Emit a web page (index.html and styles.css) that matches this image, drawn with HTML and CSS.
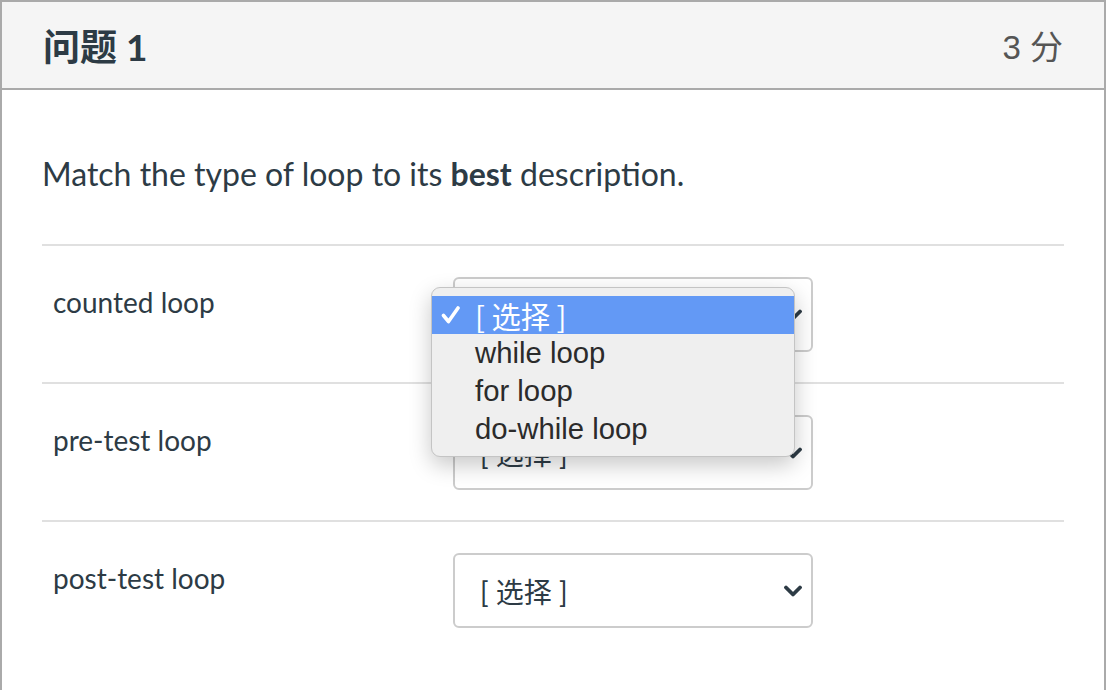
FILE: index.html
```html
<!DOCTYPE html>
<html lang="zh">
<head>
<meta charset="utf-8">
<title>问题 1</title>
<link rel="stylesheet" href="styles.css">
</head>
<body>
<div class="question">
  <div class="q-header">
    <h2 class="q-title">问题 1</h2>
    <div class="q-points">3 分</div>
  </div>
  <div class="q-body">
    <p class="q-text">Match the type of loop to its <strong>best</strong> description.</p>
    <div class="match-row">
      <div class="match-label">counted loop</div>
      <div class="select-wrap">
        <div class="select"><span>[ 选择 ]</span>
          <svg class="chev" width="18" height="12" viewBox="0 0 18 12"><polyline points="2,2.5 9,9.5 16,2.5" fill="none" stroke="#2d3b45" stroke-width="3.8" stroke-linecap="round" stroke-linejoin="round"/></svg>
        </div>
        <ul class="popup">
          <li class="opt sel"><svg class="check" width="20" height="20" viewBox="0 0 20 20"><polyline points="2.5,10.5 7.5,16.5 17,3" fill="none" stroke="#fff" stroke-width="3.6" stroke-linecap="round" stroke-linejoin="round"/></svg><span class="cjk">[ 选择 ]</span></li>
          <li class="opt">while loop</li>
          <li class="opt">for loop</li>
          <li class="opt">do-while loop</li>
        </ul>
      </div>
    </div>
    <div class="match-row">
      <div class="match-label">pre-test loop</div>
      <div class="select-wrap">
        <div class="select"><span>[ 选择 ]</span>
          <svg class="chev" width="18" height="12" viewBox="0 0 18 12"><polyline points="2,2.5 9,9.5 16,2.5" fill="none" stroke="#2d3b45" stroke-width="3.8" stroke-linecap="round" stroke-linejoin="round"/></svg>
        </div>
      </div>
    </div>
    <div class="match-row">
      <div class="match-label">post-test loop</div>
      <div class="select-wrap">
        <div class="select"><span>[ 选择 ]</span>
          <svg class="chev" width="18" height="12" viewBox="0 0 18 12"><polyline points="2,2.5 9,9.5 16,2.5" fill="none" stroke="#2d3b45" stroke-width="3.8" stroke-linecap="round" stroke-linejoin="round"/></svg>
        </div>
      </div>
    </div>
  </div>
</div>
</body>
</html>
```
FILE: styles.css
```css
html, body {
  margin: 0;
  padding: 0;
  background: #fff;
}
body {
  font-family: Lato, "Noto Sans CJK SC", sans-serif;
  color: #2d3b45;
}
.question {
  box-sizing: border-box;
  width: 1106px;
  border: 2px solid #aaaaaa;
  border-bottom: none;
  min-height: 700px;
}
.q-header {
  height: 86px;
  background: #f5f5f5;
  border-bottom: 2px solid #aaaaaa;
  display: flex;
  align-items: center;
  justify-content: space-between;
  padding: 0 41px;
}
.q-title {
  margin: 0;
  font-size: 37px;
  font-weight: 700;
  color: #2d3b45;
  font-family: Lato, "Noto Sans CJK SC", sans-serif;
}
.q-points {
  font-family: "Liberation Sans", "Noto Sans CJK SC", sans-serif;
  font-size: 33px;
  color: #555555;
}
.q-body {
  padding: 60px 40px 0;
}
.q-text {
  margin: 0 0 46px;
  font-size: 32px;
  line-height: 48px;
}
.q-text strong {
  font-weight: 700;
}
.match-row {
  border-top: 2px solid #e0e0e0;
  display: flex;
  align-items: flex-start;
  padding: 31px 0 30px;
}
.match-label {
  width: 400px;
  padding: 4px 0 0 11px;
  font-size: 28px;
  line-height: 42px;
}
.select-wrap {
  position: relative;
}
.select {
  box-sizing: border-box;
  width: 360px;
  height: 75px;
  border: 2px solid #cccccc;
  border-radius: 6px;
  background: #fff;
  display: flex;
  align-items: center;
  justify-content: space-between;
  padding: 0 9px 0 25px;
  font-size: 28px;
  color: #2d3b45;
}
.chev {
  display: block;
}
.popup {
  position: absolute;
  z-index: 10;
  left: -22px;
  top: 10px;
  box-sizing: border-box;
  width: 364px;
  margin: 0;
  padding: 8px 0;
  list-style: none;
  background: #efefef;
  border: 1px solid #c4c4c4;
  border-radius: 9px;
  box-shadow: 0 8px 22px rgba(0, 0, 0, 0.22);
  font-family: "Liberation Sans", "Noto Sans CJK SC", sans-serif;
  font-size: 29.3px;
  color: #2b2b2b;
}
.opt {
  height: 38px;
  line-height: 38px;
  padding-left: 43px;
  position: relative;
}
.opt.sel {
  background: #6399f5;
  color: #fff;
}
.check {
  position: absolute;
  left: 9px;
  top: 9px;
}
.cjk {
  font-family: "Noto Sans CJK SC", sans-serif;
}
```
